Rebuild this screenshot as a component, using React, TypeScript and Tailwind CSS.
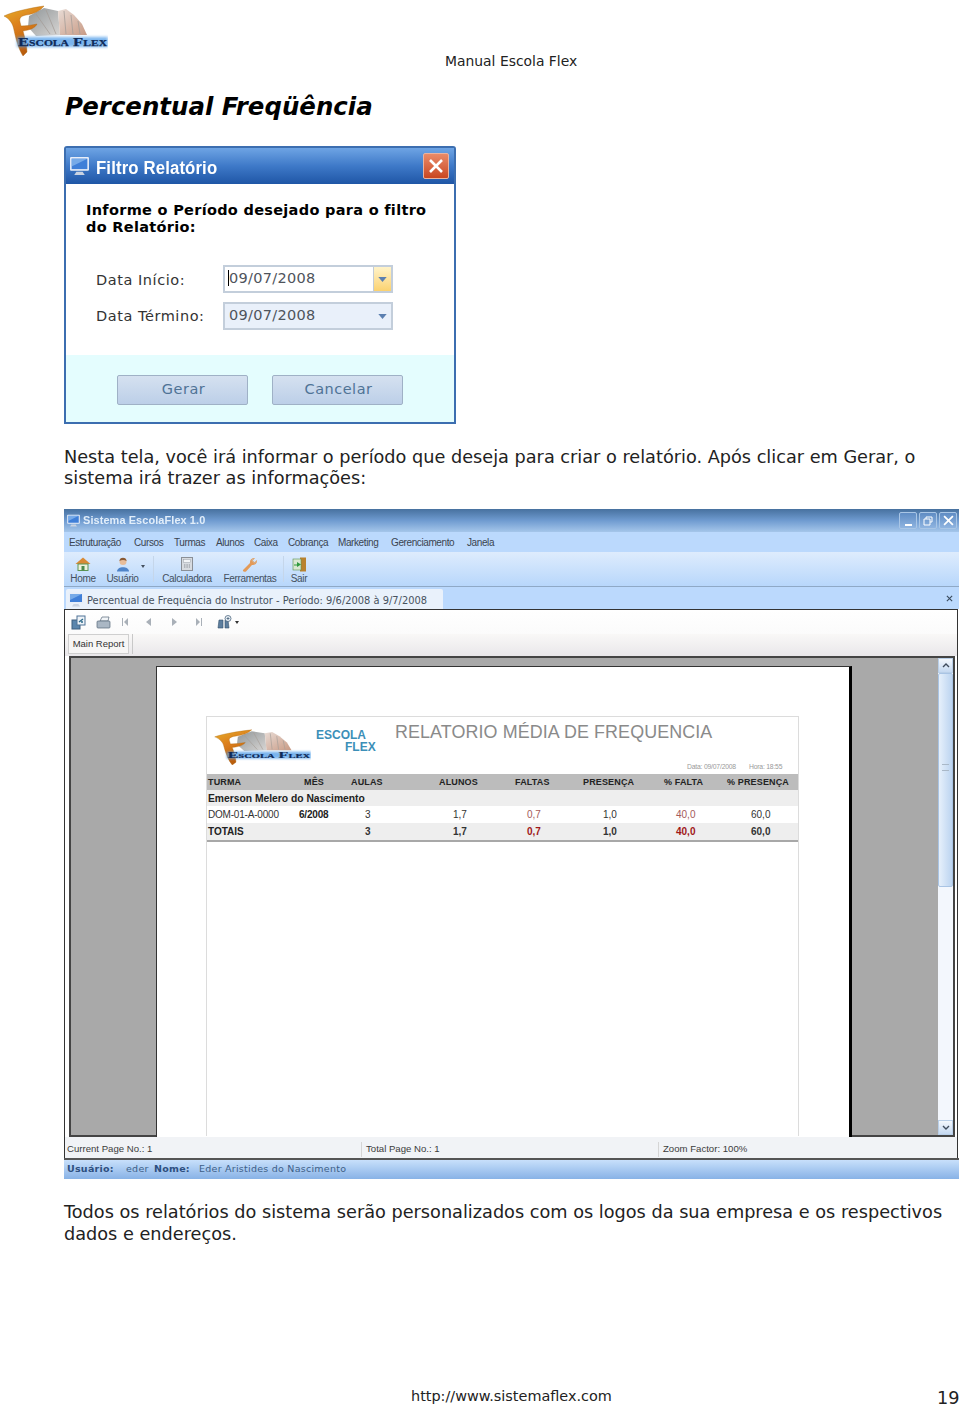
import React from "react";

const Logo = ({ className }: { className: string }) => (
  <svg viewBox="0 0 108 54" preserveAspectRatio="none" className={className}>
    <defs>
      <linearGradient id="fg" x1="0" y1="0" x2="0.4" y2="1">
        <stop offset="0" stopColor="#e6b02c" />
        <stop offset="0.45" stopColor="#dc7f1c" />
        <stop offset="1" stopColor="#b85c10" />
      </linearGradient>
      <linearGradient id="pl" x1="0" y1="0" x2="1" y2="1">
        <stop offset="0" stopColor="#8f9598" />
        <stop offset="1" stopColor="#d8d6d4" />
      </linearGradient>
      <linearGradient id="pr" x1="0" y1="0" x2="1" y2="1">
        <stop offset="0" stopColor="#e8dcd6" />
        <stop offset="1" stopColor="#c99a84" />
      </linearGradient>
      <filter id="lg" x="-10%" y="-60%" width="120%" height="220%">
        <feGaussianBlur stdDeviation="1.4" />
      </filter>
      <filter id="ls" x="-10%" y="-10%" width="120%" height="120%">
        <feGaussianBlur stdDeviation="0.35" />
      </filter>
    </defs>
    <g filter="url(#ls)">
      <path d="M29 14 L44 6 L58 9 L60 33 L36 34 L28 25 Z" fill="url(#pl)" />
      <path d="M58 9 L66 7 L74 13 L82 22 L87 33 L60 33 Z" fill="url(#pr)" />
      <path d="M36 12 L50 32 M46 8 L56 32 M64 9 L66 32 M71 13 L73 32 M78 19 L80 32" stroke="#a59d98" strokeWidth="0.8" fill="none" />
      <path d="M4 14 C12 10 30 6 44 4 C40 9 34 12 26 13 C21 14 19 16 20 20 L21 24 C26 24 32 23 37 22 C35 26 30 28 23 29 C25 36 27 44 27 50 L23 54 C19 48 16 38 14 28 C13 22 10 17 4 14 Z" fill="url(#fg)" stroke="#a8660f" strokeWidth="0.4" />
    </g>
    <rect x="17" y="35" width="91" height="10" fill="#4f9ce8" opacity="0.75" filter="url(#lg)" />
    <text x="18" y="44" fontFamily="'Liberation Serif', serif" fontWeight="700" fontSize="13" fill="#0f2a58" stroke="#0f2a58" strokeWidth="0.25" textLength="89" lengthAdjust="spacingAndGlyphs" style={{ fontVariant: "small-caps" }}>
      Escola Flex
    </text>
  </svg>
);

const Arrow = ({ className }: { className: string }) => (
  <svg viewBox="0 0 10 6" className={className}>
    <path d="M0 0 H10 L5 6 Z" fill="#5b7fb0" />
  </svg>
);

const Monitor = ({ className }: { className: string }) => (
  <svg viewBox="0 0 20 20" className={className}>
    <rect x="1" y="1" width="18" height="13" rx="1" fill="#e8eef8" />
    <rect x="2.5" y="2.5" width="15" height="10" fill="#3f7fd8" />
    <path d="M2.5 2.5 H17.5 L2.5 10 Z" fill="#8fbcef" opacity="0.7" />
    <path d="M7 15 H13 L15 18 H5 Z" fill="#c9d3e2" />
  </svg>
);

const DateField = ({ active }: { active?: boolean }) => (
  <div className={`flex h-[28px] w-[170px] items-center border-2 border-[#c3cedb] ${active ? "bg-white" : "bg-[#e9f0fa]"}`}>
    <div className="flex-1 pl-[3px] text-[14.5px] tracking-[0.3px] text-[#4f545c]">
      {active ? <span className="border-l border-black">09/07/2008</span> : <span className="pl-px">09/07/2008</span>}
    </div>
    {active ? (
      <div className="flex h-full w-[18px] items-center justify-center border-l border-[#c2ccd8] bg-gradient-to-b from-[#fff3c9] to-[#fbd26f]">
        <Arrow className="h-[5px] w-[9px]" />
      </div>
    ) : (
      <div className="flex h-full w-[18px] items-center justify-center">
        <Arrow className="h-[5px] w-[9px]" />
      </div>
    )}
  </div>
);

const DialogButton = ({ label }: { label: string }) => (
  <div className="flex h-[30px] w-[131px] items-center justify-center rounded-[2px] border border-[#9fb1c6] bg-gradient-to-b from-[#d5e1f0] to-[#bccfe8] pl-[2px] text-[14.5px] tracking-[0.5px] text-[#4f7396]">
    {label}
  </div>
);

const Dialog = () => (
  <div className="flex h-[278px] w-[392px] flex-col rounded-t-[3px] border-2 border-[#3c6eb0] bg-white">
    <div className="flex h-[36px] items-center bg-gradient-to-b from-[#6ea4e4] via-[#3e79c8] to-[#1f56a6] pl-[3px] pr-[5px]">
      <Monitor className="h-[21px] w-[21px]" />
      <span className="ml-[6px] mt-[4px] flex-1 origin-left font-['Liberation_Sans',sans-serif] text-[18px] font-bold tracking-[0.15px] text-white [transform:scaleX(0.93)]">
        Filtro Relatório
      </span>
      <div className="flex h-[26px] w-[26px] items-center justify-center rounded-[2px] border border-[#e9b3a0] bg-gradient-to-b from-[#e98a68] to-[#c9461f]">
        <svg viewBox="0 0 16 16" className="h-[16px] w-[16px]">
          <path d="M2 2 L14 14 M14 2 L2 14" stroke="#fff" strokeWidth="2.6" />
        </svg>
      </div>
    </div>
    <div className="flex flex-1 flex-col pl-[20px]">
      <p className="mt-[18px] w-[350px] text-[14.5px] font-bold leading-[17px] tracking-[0.3px] text-black">
        Informe o Período desejado para o filtro do Relatório:
      </p>
      <div className="mt-[29px] flex items-center">
        <span className="ml-[10px] mt-[3px] w-[127px] text-[14.5px] tracking-[0.55px] text-[#333]">Data Início:</span>
        <DateField active />
      </div>
      <div className="mt-[9px] flex items-center">
        <span className="ml-[10px] mt-[1px] w-[127px] text-[14.5px] tracking-[0.55px] text-[#333]">Data Término:</span>
        <DateField />
      </div>
    </div>
    <div className="flex h-[67px] gap-[24px] bg-[#e4fdfe] pl-[51px] pt-[20px]">
      <DialogButton label="Gerar" />
      <DialogButton label="Cancelar" />
    </div>
  </div>
);

const HomeIcon = () => (
  <svg viewBox="0 0 16 14" className="h-[14px] w-[16px] blur-[0.3px]">
    <path d="M0.5 7 L8 0.5 L15.5 7 Z" fill="#d98a35" />
    <rect x="3" y="7" width="10" height="6.5" fill="#eef2dc" stroke="#5c9454" />
    <rect x="6.5" y="9" width="3" height="4.5" fill="#4d8a4c" />
  </svg>
);
const UserIcon = () => (
  <svg viewBox="0 0 14 15" className="h-[15px] w-[14px] blur-[0.3px]">
    <circle cx="7" cy="4.5" r="3.5" fill="#e8bd9a" />
    <path d="M3.4 4 C3.4 -0.5 10.6 -0.5 10.6 4 C8.5 2.6 5.5 2.6 3.4 4 Z" fill="#8a5a34" />
    <path d="M1 14.5 C1 8.8 13 8.8 13 14.5 Z" fill="#4f84c9" />
  </svg>
);
const CalcIcon = () => (
  <svg viewBox="0 0 12 14" className="h-[14px] w-[12px] blur-[0.3px]">
    <rect x="0.5" y="0.5" width="11" height="13" fill="#d7dbe0" stroke="#8a8f96" />
    <rect x="2.5" y="2.5" width="7" height="3" fill="#f3f5f7" stroke="#9aa0a8" strokeWidth="0.5" />
    <path d="M3 8 H9 M3 10 H9" stroke="#8a8f96" strokeDasharray="1.4 1" />
  </svg>
);
const WrenchIcon = () => (
  <svg viewBox="0 0 16 15" className="h-[15px] w-[16px] blur-[0.3px]">
    <path d="M1 13 L8 6 C7.5 3 10 0.5 13 1 L10.8 3.6 L12.5 5.2 L15 3 C15.4 6 13 8.4 10 8 L4 14.6 C2.5 15.3 0.6 14.5 1 13 Z" fill="#e39a58" />
    <path d="M11 1.5 L10 3.6 L12.5 6 L14.6 4" stroke="#c9c2b8" strokeWidth="0.7" fill="none" />
  </svg>
);
const ExitIcon = () => (
  <svg viewBox="0 0 15 15" className="h-[15px] w-[15px] blur-[0.3px]">
    <rect x="8" y="0.5" width="6" height="14" fill="#b9822f" />
    <rect x="1" y="2" width="8" height="11" fill="#d9e8d2" stroke="#5a8f4e" strokeWidth="0.6" />
    <path d="M2 7.5 H5 V5 L9 7.5 L5 10 V8.5 H2 Z" fill="#2e9a3e" />
  </svg>
);

const ToolItem = ({ icon, label, className }: { icon: React.ReactNode; label: string; className: string }) => (
  <div className={`flex flex-col items-center pt-[4px] ${className}`}>
    <div className="flex h-[16px] items-center">{icon}</div>
    <span className="mt-[1px] text-[10px] leading-[12px] tracking-[-0.35px] text-[#44505e]">{label}</span>
  </div>
);

const Sep = () => <div className="mt-[4px] h-[26px] w-px bg-[#c5d6ea]" />;

const menu: [string, string][] = [
  ["Estruturação", "w-[65px]"],
  ["Cursos", "w-[40px]"],
  ["Turmas", "w-[42px]"],
  ["Alunos", "w-[38px]"],
  ["Caixa", "w-[34px]"],
  ["Cobrança", "w-[50px]"],
  ["Marketing", "w-[53px]"],
  ["Gerenciamento", "w-[76px]"],
  ["Janela", "w-[40px]"],
];

const ViewerGlyph = ({ d, fill = "#a9b0b8" }: { d: string; fill?: string }) => (
  <svg viewBox="0 0 8 10" className="h-[10px] w-[8px]">
    <path d={d} fill={fill} />
  </svg>
);

const COLS = "grid grid-cols-[96px_47px_88px_76px_68px_81px_63px_1fr]";

const cellsHeader = ["TURMA", "MÊS", "AULAS", "ALUNOS", "FALTAS", "PRESENÇA", "% FALTA", "% PRESENÇA"];

const DataRow = ({ bold, first, month, bg }: { bold?: boolean; first: string; month: string; bg: string }) => {
  const w = bold ? "font-bold" : "";
  const red = bold ? "text-[#a01818]" : "text-[#a45a5a]";
  return (
    <div className={`${COLS} h-[17px] items-center text-[10px] text-[#333] ${bg}`}>
      <span className={`pl-[1px] ${bold ? "text-[10px] font-bold text-[#222]" : "tracking-[-0.2px]"}`}>{first}</span>
      <span className="-ml-[4px] font-bold tracking-[-0.2px] text-[#222]">{month}</span>
      <span className={`pl-[15px] ${w}`}>3</span>
      <span className={`pl-[15px] ${w}`}>1,7</span>
      <span className={`pl-[13px] ${w} ${red}`}>0,7</span>
      <span className={`pl-[21px] ${w}`}>1,0</span>
      <span className={`pl-[13px] ${w} ${red}`}>40,0</span>
      <span className={`pl-[25px] ${w}`}>60,0</span>
    </div>
  );
};

const Report = () => (
  <div className="ml-[49px] mt-[49px] flex h-[420px] w-[593px] flex-col border-x border-t border-[#dcdcdc] font-['Liberation_Sans',sans-serif]">
    <div className="flex h-[57px]">
      <div className="flex w-[167px] pl-[4px] pt-[10px]">
        <Logo className="h-[38px] w-[100px] shrink-0" />
        <div className="ml-[5px] mt-[2px] w-[58px] whitespace-nowrap text-[12px] font-bold leading-[12px] text-[#3c8fb8]">
          <div>ESCOLA</div>
          <div className="pl-[29px]">FLEX</div>
        </div>
      </div>
      <div className="flex-1 pl-[21px]">
        <div className="mt-[3px] text-[17.9px] leading-[24px] tracking-[0.1px] text-[#8a8a8a]">RELATORIO MÉDIA DE FREQUENCIA</div>
        <div className="mt-[18px] flex gap-[13px] pl-[292px] text-[6.8px] leading-[9px] tracking-[-0.2px] text-[#9a9a9a]">
          <span>Data: 09/07/2008</span>
          <span>Hora: 18:55</span>
        </div>
      </div>
    </div>
    <div className={`${COLS} h-[16px] items-center bg-[#bcbcbc] pt-[1px] text-[9px] font-bold tracking-[0.15px] text-[#222]`}>
      {cellsHeader.map((t) => (
        <span key={t} className="pl-[1px]">{t}</span>
      ))}
    </div>
    <div className="flex h-[16px] items-center bg-[#eeeeee] pl-[1px] pt-[1px] text-[10.3px] font-bold text-[#222]">Emerson Melero do Nascimento</div>
    <DataRow first="DOM-01-A-0000" month="6/2008" bg="bg-white" />
    <DataRow bold first="TOTAIS" month="" bg="bg-[#eeeeee]" />
    <div className="h-[2px] bg-[#a8a8a8]" />
  </div>
);

const Scrollbar = () => (
  <div className="flex w-[15px] flex-col bg-[#f3f7fd]">
    <div className="flex h-[15px] items-center justify-center border border-[#b9cfe8] bg-gradient-to-b from-[#f4f8fd] to-[#c5d9f1]">
      <svg viewBox="0 0 8 5" className="h-[5px] w-[8px]">
        <path d="M1 4 L4 1 L7 4" stroke="#3f4c5c" strokeWidth="1.4" fill="none" />
      </svg>
    </div>
    <div className="flex h-[214px] items-center justify-center rounded-[2px] border border-[#a9c4e4] bg-gradient-to-r from-[#e6f0fb] to-[#bcd4f0]">
      <div className="mt-[-26px] h-[7px] w-[7px] border-y border-[#a9b8c8]" />
    </div>
    <div className="flex-1" />
    <div className="flex h-[15px] items-center justify-center border border-[#b9cfe8] bg-gradient-to-b from-[#f4f8fd] to-[#c5d9f1]">
      <svg viewBox="0 0 8 5" className="h-[5px] w-[8px]">
        <path d="M1 1 L4 4 L7 1" stroke="#3f4c5c" strokeWidth="1.4" fill="none" />
      </svg>
    </div>
  </div>
);

const AppWindow = () => (
  <div className="ml-[64px] mt-[20px] flex h-[670px] w-[895px] flex-col font-['Liberation_Sans',sans-serif]">
    <div className="flex h-[23px] items-center bg-gradient-to-b from-[#47719f] via-[#6f9bd0] to-[#a5c6ea] pl-[2px] pr-[2px]">
      <Monitor className="h-[14px] w-[15px]" />
      <span className="ml-[2px] flex-1 origin-left text-[11.5px] font-bold tracking-[0.1px] text-[#e2eefa] [transform:scaleX(0.95)]">Sistema EscolaFlex 1.0</span>
      {["min", "max", "x"].map((k) => (
        <div key={k} className="ml-[2px] flex h-[17px] w-[18px] items-center justify-center rounded-[2px] border border-[#a9c6e6] bg-gradient-to-b from-[#5f8cc4] to-[#8fb4e0]">
          {k === "min" && <div className="mt-[8px] h-[2px] w-[7px] bg-white" />}
          {k === "max" && (
            <svg viewBox="0 0 10 10" className="h-[10px] w-[10px]">
              <path d="M3 3 V1 H9 V6 H7 M1 3 H7 V9 H1 Z" stroke="#fff" fill="none" />
            </svg>
          )}
          {k === "x" && (
            <svg viewBox="0 0 10 10" className="h-[11px] w-[11px]">
              <path d="M1 1 L9 9 M9 1 L1 9" stroke="#fff" strokeWidth="1.6" />
            </svg>
          )}
        </div>
      ))}
    </div>
    <div className="flex h-[20px] items-center bg-[#bbd9fd] pl-[5px] text-[10px] tracking-[-0.4px] text-[#3a4450]">
      {menu.map(([m, w]) => (
        <span key={m} className={w}>{m}</span>
      ))}
    </div>
    <div className="flex h-[35px] border-b border-[#8fa9c6] bg-gradient-to-b from-[#deecfd] to-[#b8d7fb]">
      <ToolItem icon={<HomeIcon />} label="Home" className="ml-[6px] w-[26px]" />
      <ToolItem icon={<UserIcon />} label="Usuário" className="ml-[9px] w-[35px]" />
      <span className="ml-[1px] mt-[13px] h-0 w-0 border-x-[2.5px] border-t-[3px] border-x-transparent border-t-[#44505e]" />
      <div className="ml-[8px]"><Sep /></div>
      <ToolItem icon={<CalcIcon />} label="Calculadora" className="ml-[6px] w-[54px]" />
      <ToolItem icon={<WrenchIcon />} label="Ferramentas" className="ml-[6px] w-[60px]" />
      <div className="ml-[3px]"><Sep /></div>
      <ToolItem icon={<ExitIcon />} label="Sair" className="ml-[5px] w-[20px]" />
    </div>
    <div className="flex h-[22px] items-end bg-[#bbd9fd] pl-[2px] pr-[6px]">
      <div className="flex h-[20px] w-[377px] items-center rounded-t-[2px] bg-[#e9f1fb] pl-[2px] pt-[1px]">
        <Monitor className="h-[16px] w-[16px]" />
        <span className="ml-[3px] mt-[3px] whitespace-nowrap font-['DejaVu_Sans',sans-serif] text-[9.88px] text-[#47525e]">Percentual de Frequência do Instrutor - Período: 9/6/2008 à 9/7/2008</span>
      </div>
      <div className="flex-1" />
      <svg viewBox="0 0 8 8" className="mb-[7px] h-[7px] w-[7px]">
        <path d="M1 1 L7 7 M7 1 L1 7" stroke="#3a4c60" strokeWidth="1.3" />
      </svg>
    </div>
    <div className="flex h-[549px] w-[894px] flex-col border-x border-t border-[#333]">
      <div className="flex h-[24px] items-center bg-gradient-to-b from-white to-[#fbfbfb] pl-[6px]">
        <svg viewBox="0 0 15 15" className="h-[15px] w-[15px] blur-[0.3px]">
          <rect x="1" y="5" width="8" height="9" fill="#5b86ad" stroke="#3f5f7f" />
          <rect x="6" y="1" width="8" height="9" fill="#eef3f8" stroke="#4f7396" />
          <path d="M8 7 L12 4 M10 7 H12" stroke="#2e6b8a" strokeWidth="1.4" />
        </svg>
        <svg viewBox="0 0 15 13" className="ml-[10px] h-[13px] w-[15px] blur-[0.3px]">
          <path d="M4 5 L6 1 H13 L12 5 Z" fill="#f2f5f8" stroke="#56677a" strokeWidth="0.7" />
          <rect x="1" y="5" width="13" height="7" rx="1" fill="#aab7c4" stroke="#56677a" strokeWidth="0.7" />
        </svg>
        <div className="ml-[10px]"><ViewerGlyph d="M1 1 H2 V9 H1 Z M7 1 V9 L3 5 Z" /></div>
        <div className="ml-[16px]"><ViewerGlyph d="M6 1 V9 L1 5 Z" /></div>
        <div className="ml-[17px]"><ViewerGlyph d="M2 1 V9 L7 5 Z" /></div>
        <div className="ml-[17px]"><ViewerGlyph d="M1 1 V9 L5 5 Z M6 1 H7 V9 H6 Z" /></div>
        <div className="ml-[14px] flex items-center gap-[3px]">
          <svg viewBox="0 0 15 14" className="h-[14px] w-[15px] blur-[0.3px]">
            <path d="M2 5 H6 V13 H1 Z M8 5 H11 L12 13 H8 Z" fill="#5d7e9e" stroke="#34506c" strokeWidth="0.6" />
            <circle cx="11" cy="3.5" r="3" fill="#eef4fa" stroke="#34506c" strokeWidth="0.7" />
            <path d="M9.5 3.5 H12.5 M11 2 V5" stroke="#34506c" strokeWidth="0.7" />
          </svg>
          <span className="h-0 w-0 border-x-[2.5px] border-t-[3px] border-x-transparent border-t-[#333]" />
        </div>
      </div>
      <div className="flex h-[22px] bg-gradient-to-b from-[#f9f8f7] to-[#e9e7ea] pl-[3px]">
        <div className="flex h-[20px] w-[61px] items-center justify-center border border-[#cfcfcf] bg-[#f7f6f5] text-[9.5px] text-[#333]">Main Report</div>
        <div className="ml-[3px] h-[20px] w-px bg-[#c8c8c8]" />
      </div>
      <div className="ml-[4px] mr-[2px] flex h-[481px] border-2 border-[#444] bg-[#a9a9a9]">
        <div className="flex-1 pl-[85px] pt-[8px]">
          <div className="h-[471px] w-[696px] border-l border-r-[3px] border-t border-[#333] border-r-black bg-white">
            <Report />
          </div>
        </div>
        <Scrollbar />
      </div>
      <div className="flex h-[21px] items-center bg-[#f1f3f6] pt-[4px] text-[9.6px] text-[#3c3c3c]">
        <div className="w-[296px] pl-[2px]">Current Page No.: 1</div>
        <div className="w-[297px] border-l border-[#d5d5d5] pl-[4px]">Total Page No.: 1</div>
        <div className="flex-1 border-l border-[#d5d5d5] pl-[4px]">Zoom Factor: 100%</div>
      </div>
    </div>
    <div className="flex h-[21px] items-center border-t-2 border-[#555] bg-gradient-to-b from-[#c8e0fb] to-[#88b2e6] pl-[3px] font-['DejaVu_Sans',sans-serif] text-[9.5px] tracking-[0.25px] text-[#3d5f88]">
      <span className="w-[59px] font-bold text-[#2d4f80]">Usuário:</span>
      <span className="w-[28px]">eder</span>
      <span className="w-[45px] font-bold text-[#2d4f80]">Nome:</span>
      <span>Eder Aristides do Nascimento</span>
    </div>
  </div>
);

export default function App() {
  return (
    <div className="relative h-[1407px] w-[960px] overflow-hidden bg-white font-['DejaVu_Sans',sans-serif] text-[#111]">
      <header className="flex h-[75px] items-start pt-[2px]">
        <Logo className="h-[54px] w-[108px] shrink-0" />
        <span className="ml-[337px] mt-[50px] text-[13.9px] leading-[18px] text-[#222]">Manual Escola Flex</span>
      </header>
      <h1 className="ml-[65px] mt-[17px] text-[24.45px] font-bold italic leading-[30px] text-black">Percentual Freqüência</h1>
      <div className="ml-[64px] mt-[24px]"><Dialog /></div>
      <p className="ml-[64px] mt-[23px] w-[880px] text-[17.7px] leading-[21px] text-[#222]">
        Nesta tela, você irá informar o período que deseja para criar o relatório. Após clicar em Gerar, o sistema irá trazer as informações:
      </p>
      <AppWindow />
      <p className="ml-[64px] mt-[23px] w-[890px] text-[17.7px] leading-[21.5px] text-[#222]">
        Todos os relatórios do sistema serão personalizados com os logos da sua empresa e os respectivos dados e endereços.
      </p>
      <footer className="mt-[142px] flex items-end">
        <span className="mb-[3px] ml-[411px] text-[14.43px] leading-[18px] text-[#222]">http://www.sistemaflex.com</span>
        <span className="ml-[325px] text-[17.7px] leading-[20px] text-[#222]">19</span>
      </footer>
    </div>
  );
}
